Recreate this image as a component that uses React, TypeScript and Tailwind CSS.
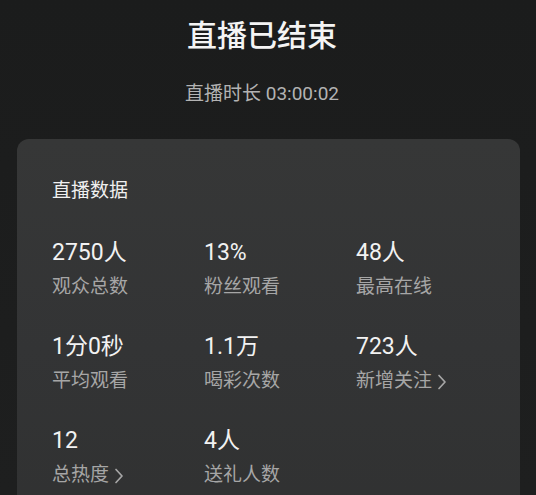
import React from 'react';

type Stat = { value: string; label: string; link?: boolean };

const stats: Stat[] = [
  { value: '2750人', label: '观众总数' },
  { value: '13%', label: '粉丝观看' },
  { value: '48人', label: '最高在线' },
  { value: '1分0秒', label: '平均观看' },
  { value: '1.1万', label: '喝彩次数' },
  { value: '723人', label: '新增关注', link: true },
  { value: '12', label: '总热度', link: true },
  { value: '4人', label: '送礼人数' },
];

function Chevron() {
  return (
    <svg width="10" height="18" viewBox="0 0 10 18" className="ml-[5px] mt-[1px]">
      <path d="M2 2.5 L8 9 L2 15.5" fill="none" stroke="#a6a6a6" strokeWidth="1.7" strokeLinecap="round" strokeLinejoin="round" />
    </svg>
  );
}

export default function App() {
  return (
    <div
      className="h-[495px] w-full overflow-hidden bg-gradient-to-b from-[#1b1c1c] to-[#1e1f1f] flex flex-col"
      style={{ fontFamily: 'Roboto, "Noto Sans CJK SC", sans-serif' }}
    >
      <div className="flex flex-col items-center pr-3">
        <h1 className="mt-4 text-[30px] leading-[40px] font-medium text-[#f4f4f4]">直播已结束</h1>
        <p className="mt-[25px] text-[19px] leading-[26px] text-[#b3b3b3]">直播时长 03:00:02</p>
      </div>

      <div className="mt-[32px] ml-[17px] w-[503px] h-[420px] shrink-0 rounded-[12px] bg-gradient-to-b from-[#363737] via-[#333435] to-[#303131] pt-[39px] pl-[35px]">
        <h2 className="text-[19px] leading-[26px] text-[#f0f0f0]">直播数据</h2>
        <div className="mt-[34px] grid grid-cols-[152px_152px_152px] gap-y-[32px]">
          {stats.map((s) => (
            <div key={s.label} className="flex flex-col">
              <span className="text-[23px] leading-[30px] text-[#f2f2f2]">{s.value}</span>
              <span className="mt-[6px] flex items-center text-[19px] leading-[26px] text-[#a6a6a6]">
                {s.label}
                {s.link && <Chevron />}
              </span>
            </div>
          ))}
        </div>
      </div>
    </div>
  );
}
